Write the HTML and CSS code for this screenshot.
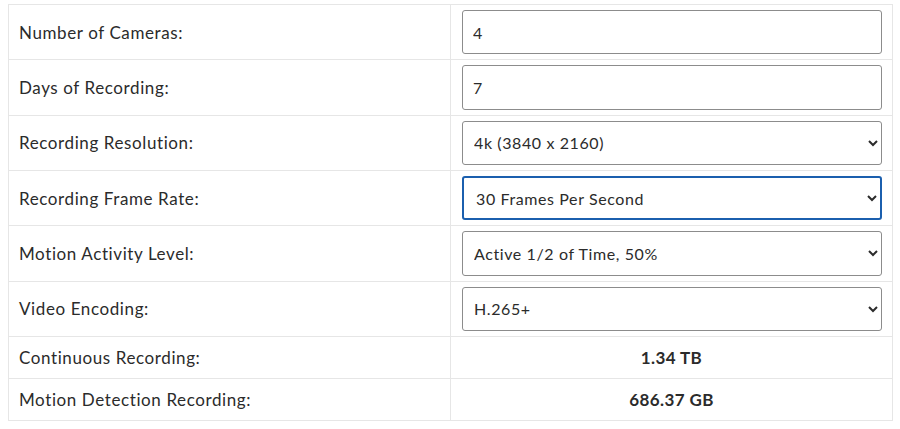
FILE: index.html
```html
<!DOCTYPE html>
<html lang="en">
<head>
<meta charset="utf-8">
<title>Storage Calculator</title>
<link rel="stylesheet" href="styles.css">
</head>
<body>
<div class="wrap">
<table class="calc">
  <tbody>
    <tr class="row-input">
      <td class="label">Number of Cameras:</td>
      <td class="field"><input class="control" type="text" value="4"></td>
    </tr>
    <tr class="row-input">
      <td class="label">Days of Recording:</td>
      <td class="field"><input class="control" type="text" value="7"></td>
    </tr>
    <tr class="row-input">
      <td class="label">Recording Resolution:</td>
      <td class="field">
        <select class="control select">
          <option>4k (3840 x 2160)</option>
          <option>1080p (1920 x 1080)</option>
        </select>
      </td>
    </tr>
    <tr class="row-input">
      <td class="label">Recording Frame Rate:</td>
      <td class="field">
        <select class="control select is-focused">
          <option>30 Frames Per Second</option>
          <option>15 Frames Per Second</option>
        </select>
      </td>
    </tr>
    <tr class="row-input">
      <td class="label">Motion Activity Level:</td>
      <td class="field">
        <select class="control select">
          <option>Active 1/2 of Time, 50%</option>
        </select>
      </td>
    </tr>
    <tr class="row-input">
      <td class="label">Video Encoding:</td>
      <td class="field">
        <select class="control select">
          <option>H.265+</option>
          <option>H.264</option>
        </select>
      </td>
    </tr>
    <tr class="row-result">
      <td class="label">Continuous Recording:</td>
      <td class="value">1.34 TB</td>
    </tr>
    <tr class="row-result">
      <td class="label">Motion Detection Recording:</td>
      <td class="value">686.37 GB</td>
    </tr>
  </tbody>
</table>
</div>
</body>
</html>
```
FILE: styles.css
```css
html, body {
  margin: 0;
  padding: 0;
  background: #ffffff;
}
body {
  font-family: "Lato", "Open Sans", sans-serif;
  color: #2b2b2b;
}
.wrap {
  padding: 4px 7px 0 8px;
}
.calc {
  width: 100%;
  border-collapse: collapse;
  table-layout: fixed;
}
.calc td {
  border: 1px solid #e6e6e6;
  vertical-align: middle;
}
.label {
  font-size: 17px;
  line-height: 25px;
  letter-spacing: 0.6px;
  padding: 0 10px 0 10px;
}
.row-input td {
  padding-top: 5px;
  padding-bottom: 5px;
}
.field {
  padding-left: 11px;
  padding-right: 10px;
}
.row-result td {
  padding-top: 8px;
  padding-bottom: 8px;
}
.value {
  text-align: center;
  font-weight: 700;
  font-size: 17px;
  line-height: 25px;
  letter-spacing: 0.4px;
}
.control {
  display: block;
  box-sizing: border-box;
  width: 100%;
  height: 44.34px;
  margin: 0;
  padding: 0 10px;
  font-family: "Lato", "Open Sans", sans-serif;
  font-size: 16px;
  letter-spacing: 0.6px;
  color: #2b2b2b;
  background-color: #ffffff;
  border: 1px solid #8c8c8c;
  border-radius: 3px;
  outline: none;
}
.select {
  padding-left: 7px;
}
.is-focused {
  border: 2px solid #1b5fae;
  padding-left: 8px;
}
```
